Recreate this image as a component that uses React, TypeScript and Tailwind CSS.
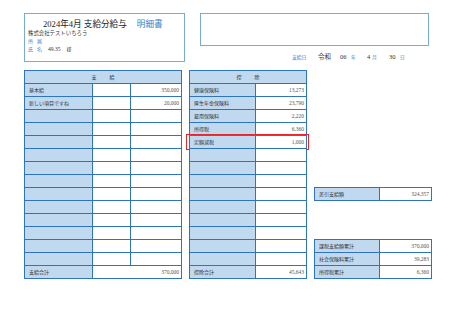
import React from "react";

const FONT = { fontFamily: '"Liberation Serif", "Noto Sans CJK JP", serif' };
const SANS = { fontFamily: '"Noto Sans CJK JP", sans-serif' };

type Row = { label: string; mid?: string; val: string; red?: boolean };

const leftRows: Row[] = [
  { label: "基本給", val: "350,000" },
  { label: "新しい項目ですね", val: "20,000" },
  ...Array.from({ length: 12 }, () => ({ label: "", val: "" })),
];

const rightRows: Row[] = [
  { label: "健康保険料", val: "13,273" },
  { label: "厚生年金保険料", val: "23,790" },
  { label: "雇用保険料", val: "2,220" },
  { label: "所得税", val: "6,360" },
  { label: "定額減税", val: "1,000", red: true },
  ...Array.from({ length: 9 }, () => ({ label: "", val: "" })),
];

function Label({ text, w }: { text: string; w: string }) {
  return (
    <div
      className={`${w} h-full bg-[#c0d9ef] border-r border-[#2f74c0] flex items-center pl-[4px] text-[5px] text-[#333]`}
      style={SANS}
    >
      {text}
    </div>
  );
}

function Val({ text, cls }: { text: string; cls: string }) {
  return (
    <div
      className={`${cls} h-full bg-white flex items-center justify-end pr-[2px] text-[5.5px] text-[#555]`}
      style={FONT}
    >
      {text}
    </div>
  );
}

function LeftTable() {
  return (
    <div className="w-[158px] border-l border-r border-t border-[#2f74c0] flex flex-col">
      <div className="h-[13px] border-b border-[#2f74c0] bg-[#c0d9ef] flex items-center justify-center gap-[13px] text-[5px] text-[#333]" style={SANS}>
        <span>支</span>
        <span>給</span>
      </div>
      {leftRows.map((r, i) => (
        <div key={i} className="h-[13px] border-b border-[#2f74c0] flex">
          <Label text={r.label} w="w-[68px]" />
          <div className="w-[38px] h-full bg-white border-r border-[#2f74c0]" />
          <Val text={r.val} cls="flex-1" />
        </div>
      ))}
      <div className="h-[13px] border-b border-[#2f74c0] flex">
        <Label text="支給合計" w="w-[68px]" />
        <Val text="370,000" cls="flex-1" />
      </div>
    </div>
  );
}

function RightTable() {
  return (
    <div className="w-[118px] border-l border-r border-t border-[#2f74c0] flex flex-col">
      <div className="h-[13px] border-b border-[#2f74c0] bg-[#c0d9ef] flex items-center justify-center gap-[13px] text-[5px] text-[#333]" style={SANS}>
        <span>控</span>
        <span>除</span>
      </div>
      {rightRows.map((r, i) => (
        <div key={i} className="relative h-[13px] border-b border-[#2f74c0] flex">
          <Label text={r.label} w="w-[66px]" />
          <Val text={r.val} cls="flex-1" />
          {r.red && (
            <div className="absolute left-[-4px] right-[-3px] top-[-2px] bottom-[-2px] border-[1.5px] border-[#e8262b]" />
          )}
        </div>
      ))}
      <div className="h-[13px] border-b border-[#2f74c0] flex">
        <Label text="控除合計" w="w-[66px]" />
        <Val text="45,643" cls="flex-1" />
      </div>
    </div>
  );
}

function SumBlock({ rows }: { rows: [string, string][] }) {
  return (
    <div className="w-[118px] border-l border-r border-t border-[#2f74c0] flex flex-col">
      {rows.map(([l, v], i) => (
        <div key={i} className="h-[13px] border-b border-[#2f74c0] flex">
          <Label text={l} w="w-[65px]" />
          <Val text={v} cls="flex-1" />
        </div>
      ))}
    </div>
  );
}

export default function App() {
  return (
    <div className="w-[450px] h-[319px] bg-white pl-[24px] pt-[13px] overflow-hidden">
      <div className="flex">
        <div className="w-[161px] h-[49px] border-[1.5px] border-[#7aa9dc] pl-[3px] pt-[5px] flex flex-col">
          <div className="h-[10px] leading-[10px] ml-[15px] flex items-baseline text-[8.6px] text-[#222]" style={FONT}>
            <span>2024年4月 支給分給与</span>
            <span className="ml-[10px] text-[#3d82cc]">明細書</span>
          </div>
          <div className="leading-[8px] h-[8px] text-[5.4px] text-[#333]" style={SANS}>
            株式会社テストいちろう
          </div>
          <div className="leading-[8px] h-[8px] text-[5px] text-[#3d82cc] flex" style={SANS}>
            <span>所</span>
            <span className="ml-[4px]">属</span>
          </div>
          <div className="leading-[8px] h-[8px] text-[5px] flex items-center" style={SANS}>
            <span className="text-[#3d82cc]">氏</span>
            <span className="ml-[4px] text-[#3d82cc]">名</span>
            <span className="ml-[6px] text-[#333] text-[5.5px]" style={FONT}>49.35</span>
            <span className="ml-[6px] text-[#333]">様</span>
          </div>
        </div>
        <div className="ml-[15px] flex flex-col">
          <div className="w-[229px] h-[33px] border-[1.5px] border-[#7aa9dc]" />
          <div className="mt-[6px] ml-[92px] h-[10px] flex items-center text-[#333]" style={SANS}>
            <span className="w-[26px] text-[4.8px] text-[#3d82cc]">支給日</span>
            <span className="w-[22px] text-[6.5px]">令和</span>
            <span className="w-[11px] text-[6.5px]" style={FONT}>06</span>
            <span className="w-[16px] text-[4.8px] text-[#3d82cc]">年</span>
            <span className="w-[5px] text-[6.5px]" style={FONT}>4</span>
            <span className="w-[17px] text-[4.8px] text-[#3d82cc]">月</span>
            <span className="w-[11px] text-[6.5px]" style={FONT}>30</span>
            <span className="text-[4.8px] text-[#3d82cc]">日</span>
          </div>
        </div>
      </div>
      <div className="mt-[8px] flex">
        <LeftTable />
        <div className="ml-[7px]">
          <RightTable />
        </div>
        <div className="ml-[7px] flex flex-col">
          <div className="h-[117px]" />
          <SumBlock rows={[["差引支給額", "324,357"]]} />
          <div className="h-[38px]" />
          <SumBlock
            rows={[
              ["課税支給額累計", "370,000"],
              ["社会保険料累計", "39,283"],
              ["所得税累計", "6,360"],
            ]}
          />
        </div>
      </div>
    </div>
  );
}
